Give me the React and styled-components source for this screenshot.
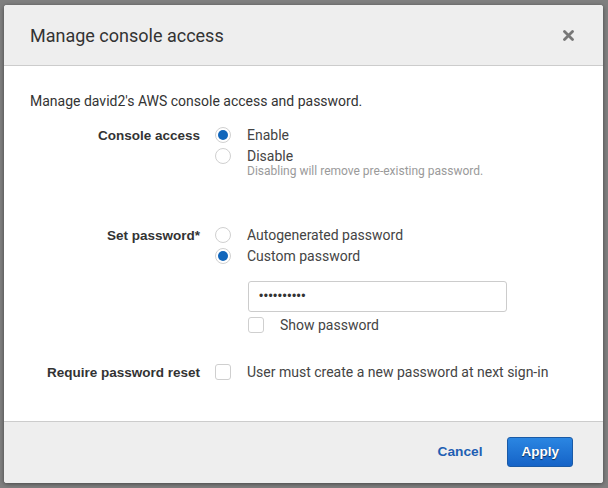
import React, { useState } from "react";
import styled, { createGlobalStyle } from "styled-components";

const GlobalStyle = createGlobalStyle`
  html, body {
    margin: 0;
    padding: 0;
  }
  body {
    background: #7f7f7f;
    font-family: Roboto, "Liberation Sans", Arial, sans-serif;
    color: #444;
  }
  * {
    box-sizing: border-box;
  }
`;

const Backdrop = styled.div`
  width: 608px;
  height: 488px;
  background: #7f7f7f;
  padding: 5px 5px 0 4px;
`;

const Modal = styled.div`
  width: 599px;
  height: 478px;
  background: #fff;
  border-radius: 3px;
  box-shadow: 0 1px 4px rgba(0, 0, 0, 0.45);
  display: flex;
  flex-direction: column;
  overflow: hidden;
`;

const Header = styled.div`
  height: 61px;
  background: #eeeeee;
  border-bottom: 1px solid #cccccc;
  display: flex;
  align-items: center;
  justify-content: space-between;
  padding: 0 29px 0 26px;
`;

const Title = styled.h2`
  margin: 0;
  font-size: 18px;
  font-weight: 400;
  color: #333;
  font-family: Roboto, sans-serif;
`;

const CloseBtn = styled.button`
  border: 0;
  background: none;
  padding: 0;
  width: 11px;
  height: 11px;
  display: flex;
  cursor: pointer;
`;

const Body = styled.div`
  flex: 1;
  padding: 25px 26px 0;
`;

const Intro = styled.p`
  margin: 0;
  font-size: 14px;
  line-height: 20px;
  color: #333;
`;

const Row = styled.div`
  display: grid;
  grid-template-columns: 170px 1fr;
  column-gap: 15px;
  margin-top: ${(p) => p.top}px;
`;

const Label = styled.div`
  text-align: right;
  font-family: "Liberation Sans", Arial, sans-serif;
  font-weight: 700;
  font-size: 13.5px;
  line-height: 21px;
  color: #333;
`;

const Controls = styled.div`
  display: flex;
  flex-direction: column;
`;

const Option = styled.label`
  display: flex;
  align-items: center;
  height: ${(p) => p.h || 21}px;
  font-size: 14px;
  color: #444;
  cursor: pointer;
`;

const Radio = styled.span`
  width: 16px;
  height: 16px;
  border-radius: 50%;
  border: 1px solid #d0d0d0;
  background: #fff;
  margin-right: 16px;
  display: flex;
  align-items: center;
  justify-content: center;
  flex-shrink: 0;

  &::after {
    content: "";
    width: 10px;
    height: 10px;
    border-radius: 50%;
    background: ${(p) => (p.checked ? "#1166bb" : "transparent")};
  }
`;

const Checkbox = styled.span`
  width: 16px;
  height: 16px;
  border-radius: 3px;
  border: 1px solid #cfcfcf;
  background: #fff;
  margin-right: 16px;
  flex-shrink: 0;
`;

const Hint = styled.div`
  margin: -3px 0 0 32px;
  font-size: 12px;
  line-height: 14px;
  color: #9a9a9a;
`;

const PasswordInput = styled.input`
  width: 259px;
  height: 31px;
  margin: 14px 0 0 33px;
  border: 1px solid #cccccc;
  border-radius: 3px;
  padding: 0 10px;
  font-size: 12px;
  color: #333;
  font-family: "Liberation Sans", Arial, sans-serif;
  letter-spacing: 0.5px;
  outline: none;
`;

const SubOption = styled(Option)`
  margin: 4px 0 0 33px;
`;

const Footer = styled.div`
  height: 62px;
  background: #eeeeee;
  border-top: 1px solid #cccccc;
  display: flex;
  align-items: center;
  justify-content: flex-end;
  gap: 25px;
  padding: 0 30px 2px 0;
`;

const CancelBtn = styled.button`
  border: 0;
  background: none;
  padding: 0;
  font-family: "Liberation Sans", Arial, sans-serif;
  font-weight: 700;
  font-size: 13.7px;
  color: #1e5fb3;
  cursor: pointer;
`;

const ApplyBtn = styled.button`
  height: 30px;
  padding: 0 13px;
  border: 1px solid #1a5aa6;
  border-radius: 3px;
  background: linear-gradient(#2b86e2, #1563c7);
  color: #fff;
  font-family: "Liberation Sans", Arial, sans-serif;
  font-weight: 700;
  font-size: 13.5px;
  text-shadow: 0 1px 1px rgba(0, 0, 0, 0.6);
  cursor: pointer;
`;

function CloseIcon() {
  return (
    <svg width="11" height="11" viewBox="0 0 11 11">
      <path
        d="M1.5 1.5 L9.5 9.5 M9.5 1.5 L1.5 9.5"
        stroke="#777"
        strokeWidth="2.8"
        strokeLinecap="round"
      />
    </svg>
  );
}

export default function App() {
  const [access, setAccess] = useState("enable");
  const [pwType, setPwType] = useState("custom");

  return (
    <Backdrop>
      <GlobalStyle />
      <Modal>
        <Header>
          <Title>Manage console access</Title>
          <CloseBtn aria-label="Close">
            <CloseIcon />
          </CloseBtn>
        </Header>
        <Body>
          <Intro>Manage david2's AWS console access and password.</Intro>

          <Row top={13.5}>
            <Label>Console access</Label>
            <Controls>
              <Option onClick={() => setAccess("enable")}>
                <Radio checked={access === "enable"} />
                Enable
              </Option>
              <Option onClick={() => setAccess("disable")}>
                <Radio checked={access === "disable"} />
                Disable
              </Option>
              <Hint>Disabling will remove pre-existing password.</Hint>
            </Controls>
          </Row>

          <Row top={47}>
            <Label>Set password*</Label>
            <Controls>
              <Option onClick={() => setPwType("auto")}>
                <Radio checked={pwType === "auto"} />
                Autogenerated password
              </Option>
              <Option onClick={() => setPwType("custom")}>
                <Radio checked={pwType === "custom"} />
                Custom password
              </Option>
              <PasswordInput type="password" defaultValue="Secret1234" />
              <SubOption h={18}>
                <Checkbox />
                Show password
              </SubOption>
            </Controls>
          </Row>

          <Row top={28}>
            <Label>Require password reset</Label>
            <Controls>
              <Option>
                <Checkbox />
                User must create a new password at next sign-in
              </Option>
            </Controls>
          </Row>
        </Body>
        <Footer>
          <CancelBtn>Cancel</CancelBtn>
          <ApplyBtn>Apply</ApplyBtn>
        </Footer>
      </Modal>
    </Backdrop>
  );
}
